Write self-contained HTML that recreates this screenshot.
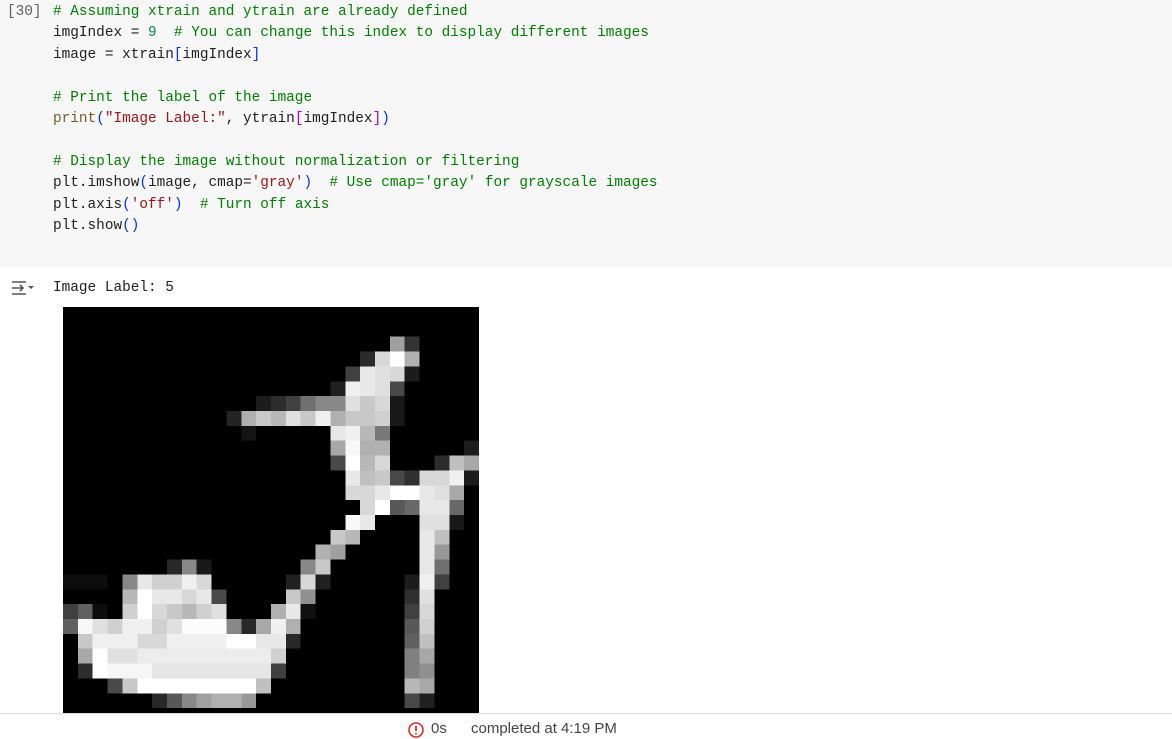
<!DOCTYPE html>
<html><head><meta charset="utf-8"><style>
body{margin:0;width:1172px;height:737px;background:#fff;position:relative;overflow:hidden;font-family:"Liberation Mono",monospace}
.cell{position:absolute;left:0;top:0;width:1172px;height:267px;background:#f7f7f7}
.code{position:absolute;left:53px;top:2px;font-size:14.4px;line-height:21.4px;white-space:pre;color:#212121}
.c{color:#008000}.s{color:#a31515}.n{color:#098658}.f{color:#795e26}.b{color:#0431fa}.p{color:#af00db}
.cnt{position:absolute;left:7px;top:2px;font-size:14.4px;line-height:21.4px;color:#616161}
.out{position:absolute;left:53px;top:278px;font-size:14.4px;line-height:20px;color:#212121}
.img{position:absolute;left:63px;top:307px;width:416px;height:406px;overflow:hidden;background:#000}
.bar{position:absolute;left:0;top:713px;width:1172px;height:24px;border-top:1px solid #dadce0;font-family:"Liberation Sans",sans-serif;font-size:15px;color:#444}
</style></head><body>
<div class="cell"></div>
<div class="cnt">[30]</div>
<div class="code"><span class="c"># Assuming xtrain and ytrain are already defined</span>
imgIndex = <span class="n">9</span>  <span class="c"># You can change this index to display different images</span>
image = xtrain<span class="b">[</span>imgIndex<span class="b">]</span>

<span class="c"># Print the label of the image</span>
<span class="f">print</span><span class="b">(</span><span class="s">"Image Label:"</span>, ytrain<span class="p">[</span>imgIndex<span class="p">]</span><span class="b">)</span>

<span class="c"># Display the image without normalization or filtering</span>
plt.imshow<span class="b">(</span>image, cmap=<span class="s">'gray'</span><span class="b">)</span>  <span class="c"># Use cmap='gray' for grayscale images</span>
plt.axis<span class="b">(</span><span class="s">'off'</span><span class="b">)</span>  <span class="c"># Turn off axis</span>
plt.show<span class="b">()</span></div>
<svg style="position:absolute;left:11px;top:279px" width="24" height="18" viewBox="0 0 24 18"><g stroke="#555" stroke-width="1.6" fill="none"><path d="M1 3h14M1 15h14M1 9h11M9 6l3 3-3 3"/></g><path d="M17 7h6l-3 3z" fill="#555"/></svg>
<div class="out">Image Label: 5</div>
<div class="img"><svg width="416" height="416" viewBox="0 0 28 28" shape-rendering="crispEdges">
<rect width="28" height="28" fill="#000"/>
<g id="g">
<rect x="22" y="2" width="1" height="1" fill="#a0a0a0"/><rect x="23" y="2" width="1" height="1" fill="#333"/>
<rect x="20" y="3" width="1" height="1" fill="#2a2a2a"/><rect x="21" y="3" width="1" height="1" fill="#d8d8d8"/><rect x="22" y="3" width="1" height="1" fill="#fff"/><rect x="23" y="3" width="1" height="1" fill="#b0b0b0"/>
<rect x="19" y="4" width="1" height="1" fill="#404040"/><rect x="20" y="4" width="1" height="1" fill="#e8e8e8"/><rect x="21" y="4" width="1" height="1" fill="#e0e0e0"/><rect x="22" y="4" width="1" height="1" fill="#d8d8d8"/><rect x="23" y="4" width="1" height="1" fill="#1c1c1c"/>
<rect x="18" y="5" width="1" height="1" fill="#202020"/><rect x="19" y="5" width="1" height="1" fill="#f0f0f0"/><rect x="20" y="5" width="1" height="1" fill="#e8e8e8"/><rect x="21" y="5" width="1" height="1" fill="#e0e0e0"/><rect x="22" y="5" width="1" height="1" fill="#484848"/>
<rect x="13" y="6" width="1" height="1" fill="#1c1c1c"/><rect x="14" y="6" width="1" height="1" fill="#2c2c2c"/><rect x="15" y="6" width="1" height="1" fill="#404040"/><rect x="16" y="6" width="1" height="1" fill="#707070"/><rect x="17" y="6" width="1" height="1" fill="#888"/><rect x="18" y="6" width="1" height="1" fill="#888"/><rect x="19" y="6" width="1" height="1" fill="#e0e0e0"/><rect x="20" y="6" width="1" height="1" fill="#c8c8c8"/><rect x="21" y="6" width="1" height="1" fill="#d8d8d8"/><rect x="22" y="6" width="1" height="1" fill="#181818"/>
<rect x="11" y="7" width="1" height="1" fill="#242424"/><rect x="12" y="7" width="1" height="1" fill="#b0b0b0"/><rect x="13" y="7" width="1" height="1" fill="#c8c8c8"/><rect x="14" y="7" width="1" height="1" fill="#b8b8b8"/><rect x="15" y="7" width="1" height="1" fill="#e0e0e0"/><rect x="16" y="7" width="1" height="1" fill="#c8c8c8"/><rect x="17" y="7" width="1" height="1" fill="#f0f0f0"/><rect x="18" y="7" width="1" height="1" fill="#b0b0b0"/><rect x="19" y="7" width="1" height="1" fill="#c8c8c8"/><rect x="20" y="7" width="1" height="1" fill="#c8c8c8"/><rect x="21" y="7" width="1" height="1" fill="#d0d0d0"/><rect x="22" y="7" width="1" height="1" fill="#181818"/>
<rect x="12" y="8" width="1" height="1" fill="#141414"/><rect x="18" y="8" width="1" height="1" fill="#e8e8e8"/><rect x="19" y="8" width="1" height="1" fill="#f0f0f0"/><rect x="20" y="8" width="1" height="1" fill="#b8b8b8"/><rect x="21" y="8" width="1" height="1" fill="#787878"/>
<rect x="18" y="9" width="1" height="1" fill="#a8a8a8"/><rect x="19" y="9" width="1" height="1" fill="#f8f8f8"/><rect x="20" y="9" width="1" height="1" fill="#b0b0b0"/><rect x="21" y="9" width="1" height="1" fill="#b0b0b0"/><rect x="27" y="9" width="1" height="1" fill="#1c1c1c"/>
<rect x="18" y="10" width="1" height="1" fill="#484848"/><rect x="19" y="10" width="1" height="1" fill="#fff"/><rect x="20" y="10" width="1" height="1" fill="#b8b8b8"/><rect x="21" y="10" width="1" height="1" fill="#d8d8d8"/><rect x="25" y="10" width="1" height="1" fill="#2c2c2c"/><rect x="26" y="10" width="1" height="1" fill="#c0c0c0"/><rect x="27" y="10" width="1" height="1" fill="#a8a8a8"/>
<rect x="19" y="11" width="1" height="1" fill="#e8e8e8"/><rect x="20" y="11" width="1" height="1" fill="#c0c0c0"/><rect x="21" y="11" width="1" height="1" fill="#c8c8c8"/><rect x="22" y="11" width="1" height="1" fill="#484848"/><rect x="23" y="11" width="1" height="1" fill="#303030"/><rect x="24" y="11" width="1" height="1" fill="#d8d8d8"/><rect x="25" y="11" width="1" height="1" fill="#d8d8d8"/><rect x="26" y="11" width="1" height="1" fill="#f0f0f0"/><rect x="27" y="11" width="1" height="1" fill="#1c1c1c"/>
<rect x="19" y="12" width="1" height="1" fill="#d8d8d8"/><rect x="20" y="12" width="1" height="1" fill="#d8d8d8"/><rect x="21" y="12" width="1" height="1" fill="#e8e8e8"/><rect x="22" y="12" width="2" height="1" fill="#fff"/><rect x="24" y="12" width="1" height="1" fill="#e8e8e8"/><rect x="25" y="12" width="1" height="1" fill="#e0e0e0"/><rect x="26" y="12" width="1" height="1" fill="#a8a8a8"/>
<rect x="20" y="13" width="1" height="1" fill="#d8d8d8"/><rect x="21" y="13" width="1" height="1" fill="#fff"/><rect x="22" y="13" width="1" height="1" fill="#585858"/><rect x="23" y="13" width="1" height="1" fill="#686868"/><rect x="24" y="13" width="2" height="1" fill="#e8e8e8"/><rect x="26" y="13" width="1" height="1" fill="#686868"/>
<rect x="19" y="14" width="1" height="1" fill="#f8f8f8"/><rect x="20" y="14" width="1" height="1" fill="#e8e8e8"/><rect x="24" y="14" width="2" height="1" fill="#e0e0e0"/><rect x="26" y="14" width="1" height="1" fill="#181818"/>
<rect x="18" y="15" width="1" height="1" fill="#c8c8c8"/><rect x="19" y="15" width="1" height="1" fill="#b8b8b8"/><rect x="24" y="15" width="1" height="1" fill="#e8e8e8"/><rect x="25" y="15" width="1" height="1" fill="#c0c0c0"/>
<rect x="17" y="16" width="1" height="1" fill="#b0b0b0"/><rect x="18" y="16" width="1" height="1" fill="#a0a0a0"/><rect x="24" y="16" width="1" height="1" fill="#e8e8e8"/><rect x="25" y="16" width="1" height="1" fill="#989898"/>
<rect x="7" y="17" width="1" height="1" fill="#282828"/><rect x="8" y="17" width="1" height="1" fill="#888"/><rect x="9" y="17" width="1" height="1" fill="#181818"/><rect x="16" y="17" width="1" height="1" fill="#888"/><rect x="17" y="17" width="1" height="1" fill="#c8c8c8"/><rect x="24" y="17" width="1" height="1" fill="#e8e8e8"/><rect x="25" y="17" width="1" height="1" fill="#707070"/>
<rect x="0" y="18" width="3" height="1" fill="#0c0c0c"/><rect x="4" y="18" width="1" height="1" fill="#888"/><rect x="5" y="18" width="1" height="1" fill="#e8e8e8"/><rect x="6" y="18" width="2" height="1" fill="#d0d0d0"/><rect x="8" y="18" width="1" height="1" fill="#f0f0f0"/><rect x="9" y="18" width="1" height="1" fill="#d8d8d8"/><rect x="15" y="18" width="1" height="1" fill="#202020"/><rect x="16" y="18" width="1" height="1" fill="#d8d8d8"/><rect x="17" y="18" width="1" height="1" fill="#202020"/><rect x="23" y="18" width="1" height="1" fill="#1c1c1c"/><rect x="24" y="18" width="1" height="1" fill="#f0f0f0"/><rect x="25" y="18" width="1" height="1" fill="#404040"/>
<rect x="4" y="19" width="1" height="1" fill="#b8b8b8"/><rect x="5" y="19" width="1" height="1" fill="#fff"/><rect x="6" y="19" width="2" height="1" fill="#e8e8e8"/><rect x="8" y="19" width="1" height="1" fill="#d8d8d8"/><rect x="9" y="19" width="1" height="1" fill="#e8e8e8"/><rect x="10" y="19" width="1" height="1" fill="#484848"/><rect x="15" y="19" width="1" height="1" fill="#c8c8c8"/><rect x="16" y="19" width="1" height="1" fill="#909090"/><rect x="23" y="19" width="1" height="1" fill="#303030"/><rect x="24" y="19" width="1" height="1" fill="#e0e0e0"/>
<rect x="0" y="20" width="1" height="1" fill="#404040"/><rect x="1" y="20" width="1" height="1" fill="#606060"/><rect x="2" y="20" width="1" height="1" fill="#0c0c0c"/><rect x="4" y="20" width="1" height="1" fill="#d0d0d0"/><rect x="5" y="20" width="1" height="1" fill="#fff"/><rect x="6" y="20" width="1" height="1" fill="#d8d8d8"/><rect x="7" y="20" width="1" height="1" fill="#c8c8c8"/><rect x="8" y="20" width="1" height="1" fill="#b8b8b8"/><rect x="9" y="20" width="1" height="1" fill="#d0d0d0"/><rect x="10" y="20" width="1" height="1" fill="#e0e0e0"/><rect x="14" y="20" width="1" height="1" fill="#b0b0b0"/><rect x="15" y="20" width="1" height="1" fill="#e8e8e8"/><rect x="16" y="20" width="1" height="1" fill="#101010"/><rect x="23" y="20" width="1" height="1" fill="#404040"/><rect x="24" y="20" width="1" height="1" fill="#d8d8d8"/>
<rect x="0" y="21" width="1" height="1" fill="#606060"/><rect x="1" y="21" width="1" height="1" fill="#f8f8f8"/><rect x="2" y="21" width="1" height="1" fill="#e0e0e0"/><rect x="3" y="21" width="1" height="1" fill="#d0d0d0"/><rect x="4" y="21" width="2" height="1" fill="#f0f0f0"/><rect x="6" y="21" width="1" height="1" fill="#d0d0d0"/><rect x="7" y="21" width="1" height="1" fill="#e0e0e0"/><rect x="8" y="21" width="3" height="1" fill="#fcfcfc"/><rect x="11" y="21" width="1" height="1" fill="#888"/><rect x="12" y="21" width="1" height="1" fill="#282828"/><rect x="13" y="21" width="1" height="1" fill="#a8a8a8"/><rect x="14" y="21" width="1" height="1" fill="#f0f0f0"/><rect x="15" y="21" width="1" height="1" fill="#b0b0b0"/><rect x="23" y="21" width="1" height="1" fill="#585858"/><rect x="24" y="21" width="1" height="1" fill="#d0d0d0"/>
<rect x="1" y="22" width="1" height="1" fill="#c8c8c8"/><rect x="2" y="22" width="3" height="1" fill="#f0f0f0"/><rect x="5" y="22" width="2" height="1" fill="#d8d8d8"/><rect x="7" y="22" width="4" height="1" fill="#f0f0f0"/><rect x="11" y="22" width="2" height="1" fill="#fff"/><rect x="13" y="22" width="2" height="1" fill="#e8e8e8"/><rect x="15" y="22" width="1" height="1" fill="#282828"/><rect x="23" y="22" width="1" height="1" fill="#606060"/><rect x="24" y="22" width="1" height="1" fill="#c0c0c0"/>
<rect x="1" y="23" width="1" height="1" fill="#a8a8a8"/><rect x="2" y="23" width="1" height="1" fill="#fff"/><rect x="3" y="23" width="2" height="1" fill="#e0e0e0"/><rect x="5" y="23" width="9" height="1" fill="#ececec"/><rect x="14" y="23" width="1" height="1" fill="#d0d0d0"/><rect x="23" y="23" width="1" height="1" fill="#808080"/><rect x="24" y="23" width="1" height="1" fill="#a8a8a8"/>
<rect x="1" y="24" width="1" height="1" fill="#2c2c2c"/><rect x="2" y="24" width="1" height="1" fill="#fff"/><rect x="3" y="24" width="3" height="1" fill="#f6f6f6"/><rect x="6" y="24" width="8" height="1" fill="#e6e6e6"/><rect x="14" y="24" width="1" height="1" fill="#404040"/><rect x="23" y="24" width="1" height="1" fill="#808080"/><rect x="24" y="24" width="1" height="1" fill="#909090"/>
<rect x="3" y="25" width="1" height="1" fill="#484848"/><rect x="4" y="25" width="1" height="1" fill="#c8c8c8"/><rect x="5" y="25" width="8" height="1" fill="#fff"/><rect x="13" y="25" width="1" height="1" fill="#c0c0c0"/><rect x="23" y="25" width="1" height="1" fill="#b8b8b8"/><rect x="24" y="25" width="1" height="1" fill="#a8a8a8"/>
<rect x="6" y="26" width="1" height="1" fill="#282828"/><rect x="7" y="26" width="1" height="1" fill="#585858"/><rect x="8" y="26" width="1" height="1" fill="#888"/><rect x="9" y="26" width="1" height="1" fill="#a0a0a0"/><rect x="10" y="26" width="2" height="1" fill="#b0b0b0"/><rect x="12" y="26" width="1" height="1" fill="#989898"/><rect x="23" y="26" width="1" height="1" fill="#484848"/><rect x="24" y="26" width="1" height="1" fill="#202020"/>
</g></svg></div>
<div class="bar">
<svg style="position:absolute;left:407px;top:7px" width="18" height="18" viewBox="0 0 18 18"><circle cx="9" cy="9" r="7" fill="none" stroke="#d93025" stroke-width="1.6"/><path d="M9 5v5" stroke="#d93025" stroke-width="1.8"/><circle cx="9" cy="12.6" r="1" fill="#d93025"/></svg>
<span style="position:absolute;left:431px;top:6px">0s</span>
<span style="position:absolute;left:471px;top:6px">completed at 4:19 PM</span>
</div>
</body></html>
